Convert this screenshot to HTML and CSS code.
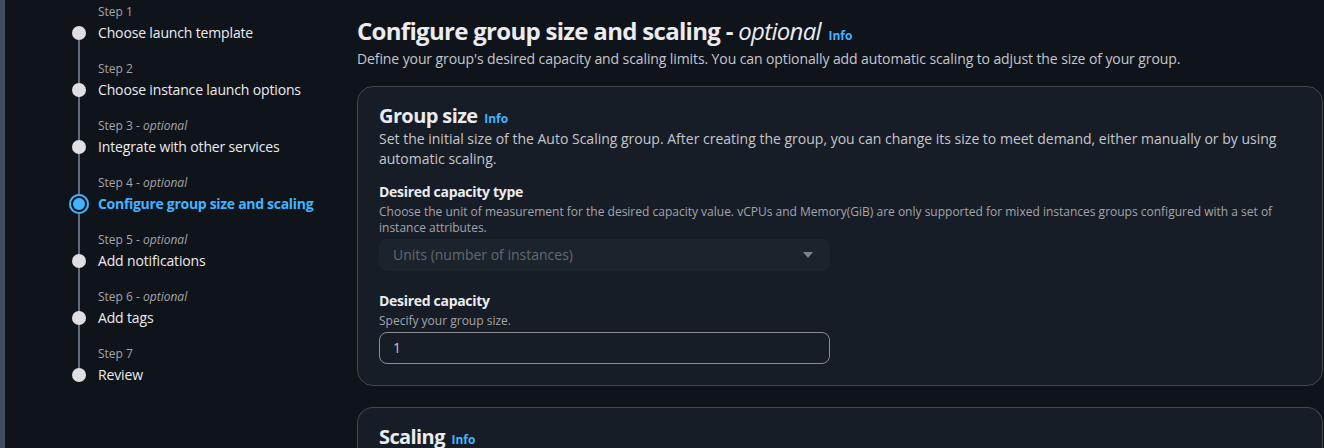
FILE: index.html
```html
<!DOCTYPE html>
<html lang="en">
<head>
<meta charset="utf-8">
<title>Configure group size and scaling</title>
<link rel="stylesheet" href="styles.css">
</head>
<body>
<div class="frame">
  <div class="edge"></div>
  <nav class="steps">
    <ol>
      <li class="step"><span class="num">Step 1</span><span class="dot"></span><span class="title">Choose launch template</span></li>
      <li class="step"><span class="num">Step 2</span><span class="dot"></span><span class="title">Choose instance launch options</span></li>
      <li class="step"><span class="num">Step 3 - <i>optional</i></span><span class="dot"></span><span class="title">Integrate with other services</span></li>
      <li class="step active"><span class="num">Step 4 - <i>optional</i></span><span class="dot"></span><span class="title">Configure group size and scaling</span></li>
      <li class="step"><span class="num">Step 5 - <i>optional</i></span><span class="dot"></span><span class="title">Add notifications</span></li>
      <li class="step"><span class="num">Step 6 - <i>optional</i></span><span class="dot"></span><span class="title">Add tags</span></li>
      <li class="step last"><span class="num">Step 7</span><span class="dot"></span><span class="title">Review</span></li>
    </ol>
  </nav>
  <main class="main">
    <header class="page-head">
      <h1>Configure group size and scaling - <i>optional</i> <a class="info" href="#">Info</a></h1>
      <p class="page-desc">Define your group's desired capacity and scaling limits. You can optionally add automatic scaling to adjust the size of your group.</p>
    </header>
    <section class="card">
      <h2>Group size <a class="info" href="#">Info</a></h2>
      <p class="card-desc">Set the initial size of the Auto Scaling group. After creating the group, you can change its size to meet demand, either manually or by using automatic scaling.</p>
      <div class="field">
        <label class="label">Desired capacity type</label>
        <p class="hint">Choose the unit of measurement for the desired capacity value. vCPUs and Memory(GiB) are only supported for mixed instances groups configured with a set of instance attributes.</p>
        <div class="select"><span>Units (number of instances)</span><svg class="caret" width="12" height="12" viewBox="0 0 12 12"><path d="M1 3h10l-5 6z" fill="currentColor"/></svg></div>
      </div>
      <div class="field">
        <label class="label">Desired capacity</label>
        <p class="hint">Specify your group size.</p>
        <div class="input">1</div>
      </div>
    </section>
    <section class="card card-next">
      <h2>Scaling <a class="info" href="#">Info</a></h2>
    </section>
  </main>
</div>
</body>
</html>
```
FILE: styles.css
```css
* { box-sizing: border-box; }
html, body { margin: 0; padding: 0; }
body {
  background: #0f141a;
  font-family: "Open Sans", "Noto Sans", sans-serif;
  color: #c6c6cd;
  font-size: 14px;
  line-height: 20px;
  overflow: hidden;
  height: 448px;
}
.frame { display: flex; height: 448px; }
.edge { width: 5px; background: #414d5c; flex: none; }
.steps { width: 352px; flex: none; padding: 0 0 0 62px; }
.steps ol { list-style: none; margin: 0; padding: 0; }
.step {
  display: grid;
  grid-template-columns: 24px 1fr;
  grid-template-rows: 20px 26px;
  column-gap: 7px;
  height: 57px;
  position: relative;
}
.step:first-child { margin-top: 3px; }
.num {
  grid-column: 2; grid-row: 1;
  font-size: 12px; line-height: 16px; color: #a4a4ad; padding-top: 1px;
}
.num i { font-style: italic; }
.dot {
  grid-column: 1; grid-row: 2;
  width: 14px; height: 14px; border-radius: 50%;
  background: #dedee3; margin: 3px 0 0 5px;
  position: relative; z-index: 1;
}
.step::before {
  content: ""; position: absolute; left: 11px; top: 30px; width: 2px; height: 57px;
  background: #5f6b7a;
}
.step.last::before { display: none; }
.title { grid-column: 2; grid-row: 2; color: #ebebf0; font-size: 14px; line-height: 20px; padding-top: 0; letter-spacing: -0.15px; }
.active .title { color: #42b4ff; font-weight: 700; letter-spacing: -0.3px; }
.active .dot {
  background: #42b4ff; width: 20px; height: 20px; margin: 0 0 0 2px;
  box-shadow: inset 0 0 0 2px #42b4ff, inset 0 0 0 4px #0f141a;
}
.main { flex: 1; padding: 15px 0 0 0; min-width: 0; }
h1 {
  margin: 0; font-size: 24px; line-height: 32px; font-weight: 700; color: #ebebf0; letter-spacing: -0.7px;
}
h1 i { font-weight: 400; }
.info { color: #42b4ff; font-size: 12px; line-height: 1; font-weight: 700; text-decoration: none; margin-left: 2px; letter-spacing: 0; }
.page-desc { margin: 2px 0 0; color: #c6c6cd; letter-spacing: -0.1px; }
.card {
  margin: 17px 1px 0 0;
  background: #161d26;
  border: 1px solid #424650;
  border-radius: 16px;
  padding: 16px 20px 21px 21px;
}
.card-next { margin-top: 21px; height: 60px; border-bottom: 0; }
h2 { margin: 0; font-size: 20px; line-height: 26px; font-weight: 700; color: #ebebf0; letter-spacing: -0.6px; }
.card-desc { margin: 0; color: #c6c6cd; }
.field { margin-top: 13px; }
.label { display: block; font-weight: 700; color: #ebebf0; font-size: 14px; line-height: 20px; letter-spacing: -0.3px; }
.hint { margin: 2px 0 0; font-size: 12px; line-height: 16px; color: #a4a4ad; }
.select {
  margin-top: 3px; width: 451px; height: 32px; border-radius: 8px;
  background: #1b232d; display: flex; align-items: center; justify-content: space-between;
  padding: 0 16px 0 14px; color: #656871;
}
.caret { color: #7d8089; }
.field + .field { margin-top: 20px; }
.input {
  margin-top: 3px; width: 451px; height: 32px; border-radius: 8px;
  border: 1px solid #8c8c94; padding: 5px 13px; color: #c6c6cd;
}
```
